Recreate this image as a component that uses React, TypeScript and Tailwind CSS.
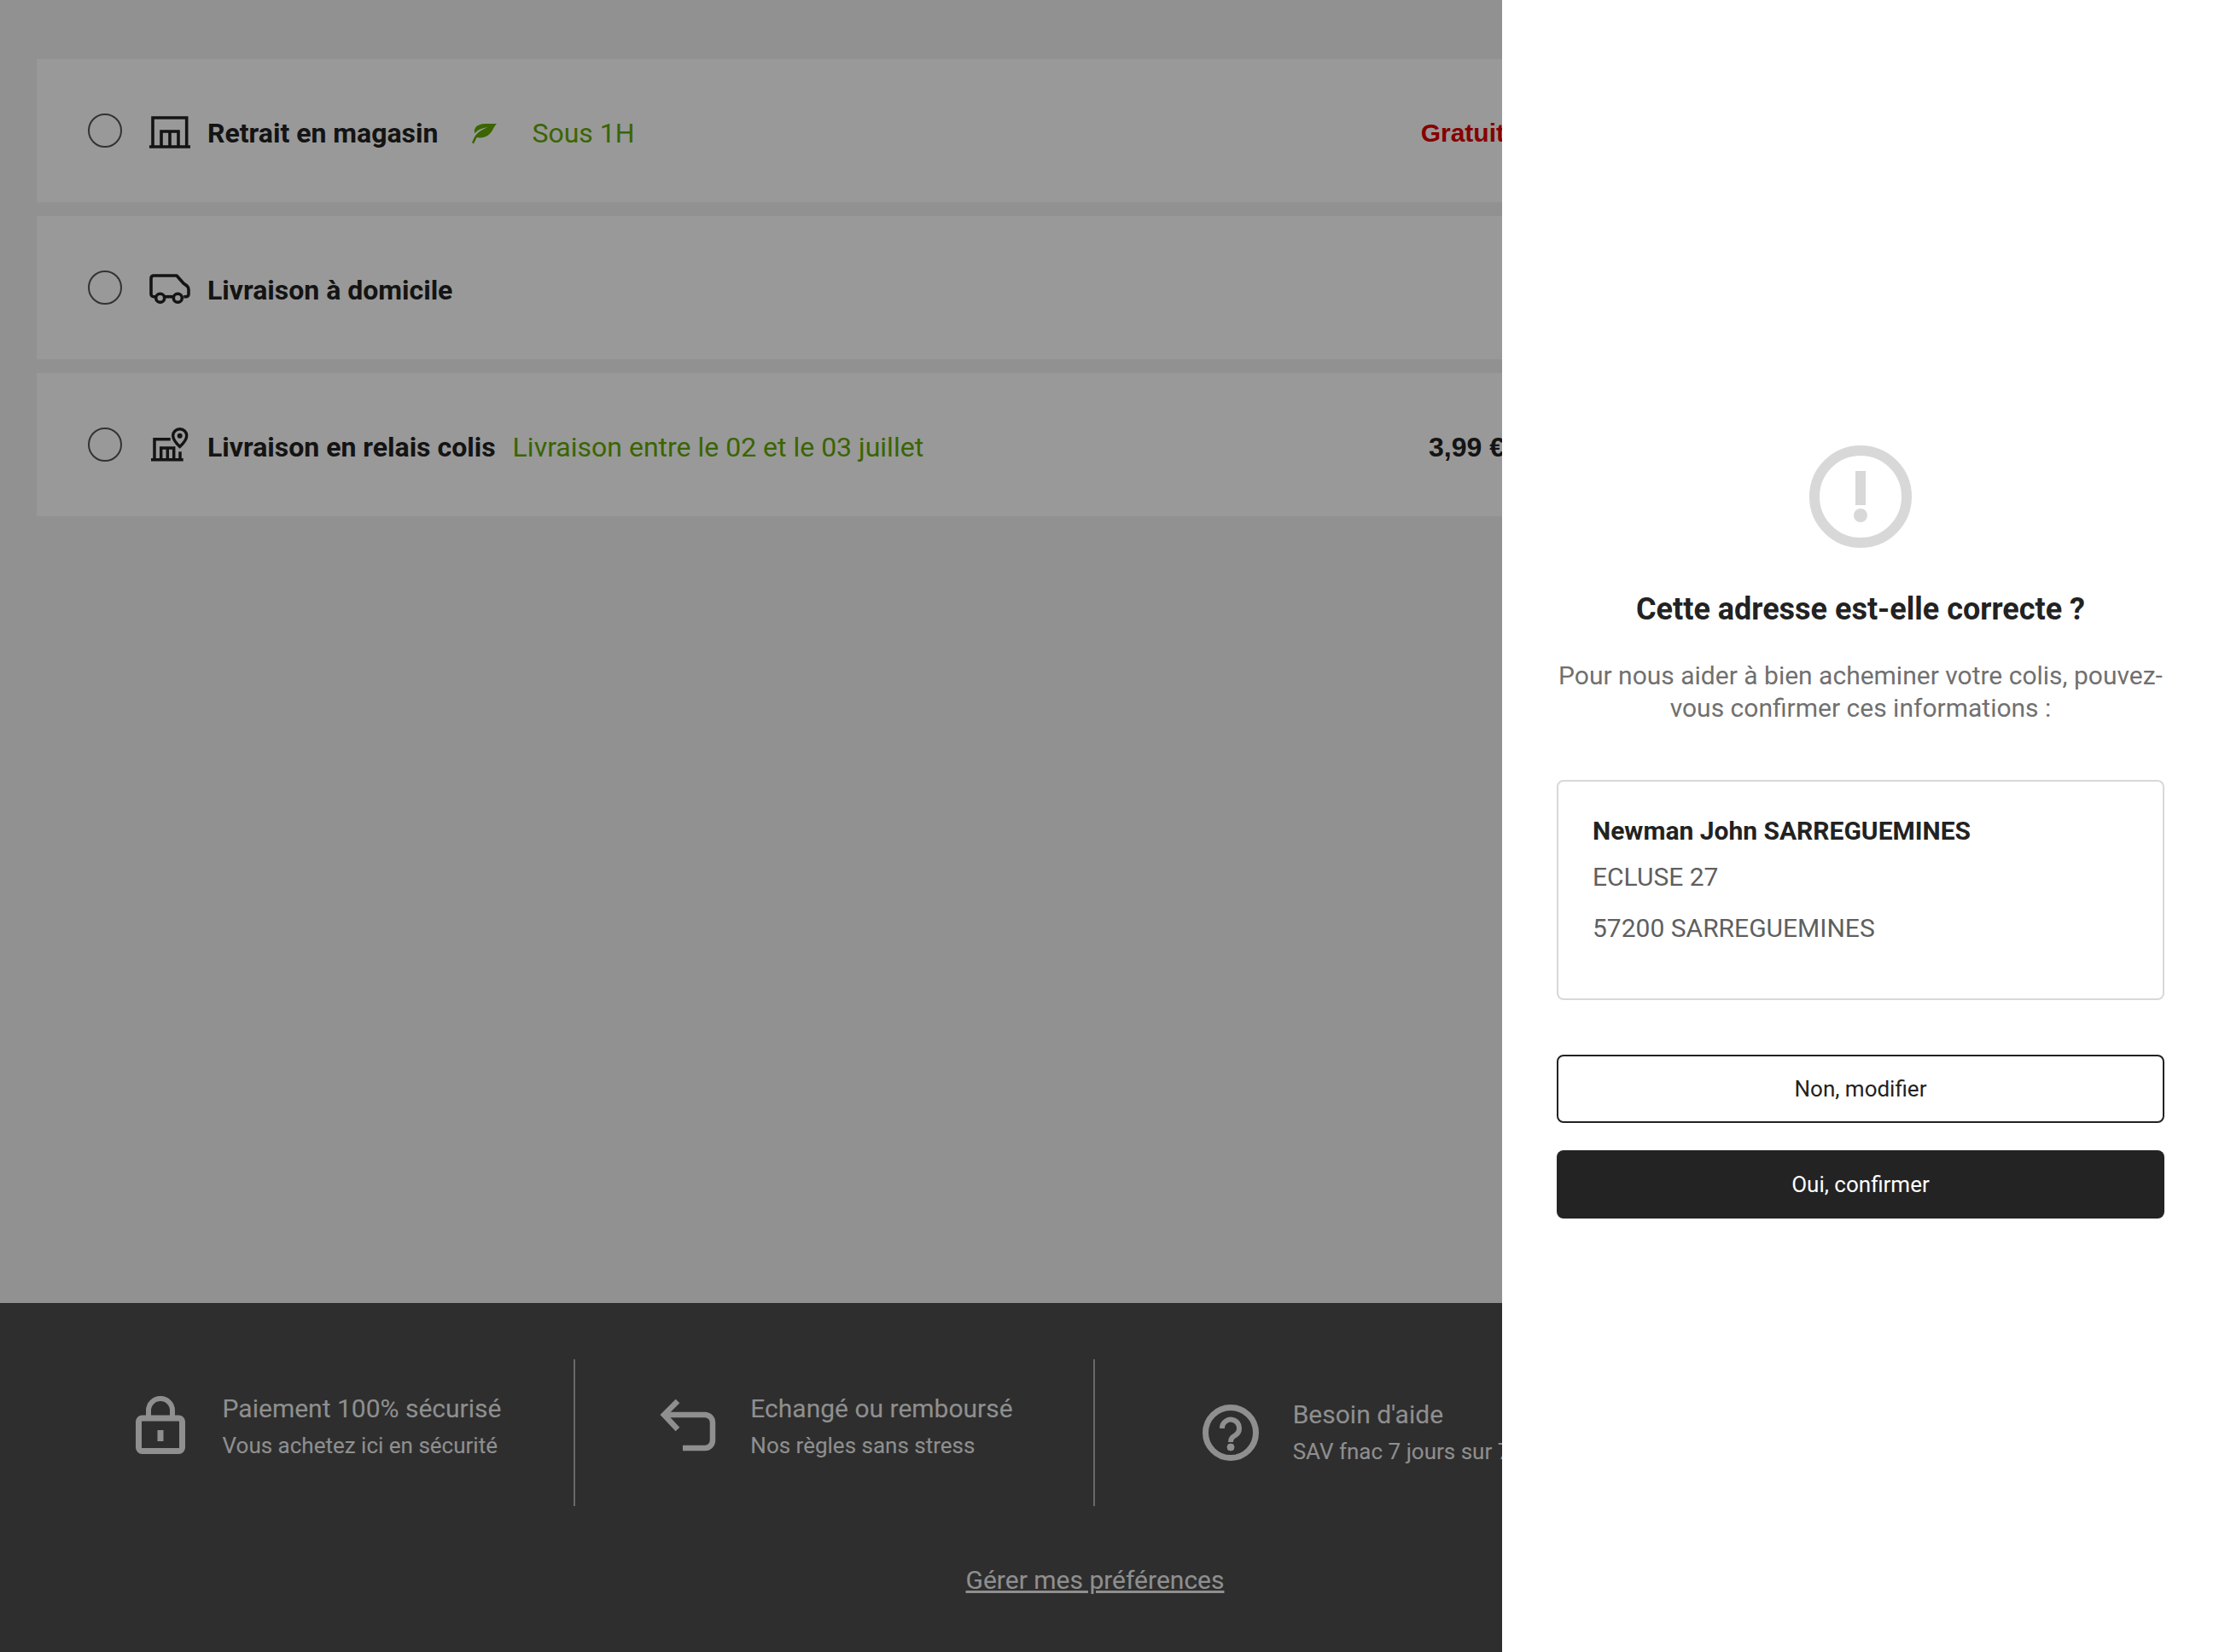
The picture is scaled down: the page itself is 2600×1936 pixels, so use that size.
import React from "react";

const font = "font-['Roboto',sans-serif]";

// --- Icons ---
const ShopIcon = () => (
  <svg className="mt-[3px]" width="48" height="38" viewBox="0 0 48 38" fill="none" stroke="currentColor" strokeWidth="3.6">
    <path d="M4 36V2h39.700v34" />
    <path d="M0 36h48" />
    <path d="M14 36V18h20v18M24 18v18" />
  </svg>
);

const VanIcon = () => (
  <svg className="mt-[3px]" width="48" height="36" viewBox="0 0 48 36" fill="none" stroke="currentColor" strokeWidth="3.6" strokeLinejoin="round">
    <path d="M7.700 26.700H5a3 3 0 0 1-3-3V5a3 3 0 0 1 3-3h27l8 9 4 3c1.500 1.200 2 2.500 2 4.500v5c0 2-1.500 3.200-3 3.200h-2.700" />
    <path d="M17.700 26.700h10.600" />
    <circle cx="12.700" cy="28.300" r="5" />
    <circle cx="33.300" cy="28.300" r="5" />
  </svg>
);

const RelayIcon = () => (
  <svg width="44" height="40" viewBox="0 0 44 40" fill="none" stroke="currentColor" strokeWidth="3.500">
    <path d="M4 38V13.700h18.700" />
    <path d="M0 37.800h37.700" />
    <path d="M11.700 38V24h15v14M19.300 24v14" />
    <path d="M34 28.300V38" />
    <path d="M33.700 22.500C28 17 25.700 13.500 25.700 9.700a8 8 0 0 1 16 0c0 3.800-2.300 7.300-8 12.800z" strokeWidth="3.400" />
    <circle cx="33.700" cy="9.700" r="3" fill="currentColor" stroke="none" />
  </svg>
);

const LeafIcon = () => (
  <svg width="30" height="25" viewBox="0 0 30 25" fill="currentColor">
    <path d="M29 1C22 1.500 12 0 7 3 3.500 5 2 9 3.300 12.300 6 8.500 12 6 19 5 12 7.500 6 11.500 3 16.500L0 23l2 1.500L5.700 17C10 18 15 17 19 14.500 24 11 25 5 29 1z" />
  </svg>
);

const LockIcon = () => (
  <svg width="58" height="68" viewBox="0 0 58 68" fill="none" stroke="currentColor">
    <path d="M15 25v-8a14 14 0 0 1 28 0v8" strokeWidth="6" />
    <rect x="3.500" y="26" width="51" height="38.500" rx="4" strokeWidth="7" />
    <path d="M29 40v13" strokeWidth="7" />
  </svg>
);

const ReturnIcon = () => (
  <svg width="66" height="62" viewBox="0 0 66 62" fill="none" stroke="currentColor" strokeWidth="6.500">
    <path d="M21 3 5 19l16 17" />
    <path d="M5 19h48a9 9 0 0 1 9 9v21a9 9 0 0 1-9 9H27" />
  </svg>
);

const HelpIcon = () => (
  <svg width="66" height="66" viewBox="0 0 66 66" fill="none" stroke="currentColor">
    <circle cx="33" cy="33" r="29.500" strokeWidth="7" />
    <path d="M23 28a10 10 0 1 1 15.500 8c-3.500 2-5.500 3.500-5.500 8" strokeWidth="6" />
    <circle cx="33" cy="50" r="4" fill="currentColor" />
  </svg>
);

const AlertIcon = () => (
  <svg width="120" height="120" viewBox="0 0 120 120" fill="none">
    <circle cx="60" cy="60" r="54" stroke="#d8d8d8" strokeWidth="12" />
    <rect x="54" y="30" width="12" height="40" fill="#d8d8d8" />
    <circle cx="60" cy="82" r="8" fill="#d8d8d8" />
  </svg>
);

// --- Page behind the panel ---
interface RowProps {
  icon: React.ReactNode;
  label: string;
  extra?: React.ReactNode;
  price?: React.ReactNode;
}

const ShippingRow = ({ icon, label, extra, price }: RowProps) => (
  <div className="flex h-[168px] items-center bg-white pl-[60px] pr-[794px]">
    <span className="h-10 w-10 shrink-0 rounded-full border-2 border-[#555] bg-white" />
    <span className="ml-8 flex w-12 shrink-0 justify-center text-[#222]">{icon}</span>
    <span className="ml-5 mt-[5px] text-[32px] font-bold text-[#222]">{label}</span>
    {extra}
    {price && <span className="ml-auto mt-[5px]">{price}</span>}
  </div>
);

interface ReassuranceProps {
  icon: React.ReactNode;
  title: string;
  sub: string;
  last?: boolean;
  low?: boolean;
}

const Reassurance = ({ icon, title, sub, last, low }: ReassuranceProps) => (
  <div className={`flex h-[172px] w-[609px] items-center justify-center gap-[39px] border-[#b0b0b0] pl-1 ${last ? "" : "border-r-2"}`}>
    <span className={`flex w-[68px] justify-center text-[#eeeeee] ${low ? "" : "mb-[18px]"}`}>{icon}</span>
    <div className={low ? "" : "mb-[14px]"}>
      <div className="text-[30px] leading-[44px] text-[#eeeeee]">{title}</div>
      <div className="text-[26px] leading-[42px] text-[#eeeeee]">{sub}</div>
    </div>
  </div>
);

export default function App() {
  return (
    <div className={`relative h-[1936px] w-[2600px] overflow-hidden bg-[#f2f2f2] ${font}`}>
      <div className="flex h-[1527px] flex-col gap-4 px-[43px] pt-[69px]">
        <ShippingRow
          icon={<ShopIcon />}
          label="Retrait en magasin"
          extra={
            <>
              <span className="ml-10 mt-[6px] text-[#61a900]"><LeafIcon /></span>
              <span className="ml-10 mt-[5px] text-[32px] text-[#61a900]">Sous 1H</span>
            </>
          }
          price={<span className="font-['Liberation_Sans',sans-serif] text-[30px] font-bold text-[#e00000]">Gratuit</span>}
        />
        <ShippingRow icon={<VanIcon />} label="Livraison à domicile" />
        <ShippingRow
          icon={<RelayIcon />}
          label="Livraison en relais colis"
          extra={<span className="ml-5 mt-[5px] text-[32px] text-[#61a900]">Livraison entre le 02 et le 03 juillet</span>}
          price={<span className="font-['Liberation_Sans',sans-serif] text-[32px] font-bold text-[#222]">3,99 €</span>}
        />
      </div>

      <footer className="h-[409px] bg-[#4d4d4d] pt-[66px]">
        <div className="flex justify-center pr-[34px]">
          <Reassurance icon={<LockIcon />} title="Paiement 100% sécurisé" sub="Vous achetez ici en sécurité" />
          <Reassurance icon={<ReturnIcon />} title="Echangé ou remboursé" sub="Nos règles sans stress" />
          <Reassurance icon={<HelpIcon />} title="Besoin d'aide" sub="SAV fnac 7 jours sur 7" low />
          <div className="w-[609px]" />
        </div>
        <div className="mt-[64px] pr-[34px] text-center">
          <a className="text-[30px] text-[#eeeeee] underline">Gérer mes préférences</a>
        </div>
      </footer>

      {/* overlay and side panel */}
      <div className="absolute inset-0 bg-black/40" />
      <aside className="absolute bottom-0 right-0 top-0 flex w-[840px] flex-col items-center bg-white px-16 pt-[522px]">
        <AlertIcon />
        <h2 className="mt-[50px] text-[36px] font-bold leading-[44px] text-[#222]">Cette adresse est-elle correcte ?</h2>
        <p className="mt-[37px] text-center text-[30px] leading-[38px] text-[#707070]">
          Pour nous aider à bien acheminer votre colis, pouvez-vous confirmer ces informations :
        </p>
        <div className="mt-[65px] h-[258px] w-full rounded-lg border-2 border-[#d8d8d8] px-10 pt-[38px]">
          <div className="text-[30px] font-bold leading-10 text-[#222]">Newman John SARREGUEMINES</div>
          <div className="mt-[14px] text-[30px] leading-10 text-[#5f5f5f]">ECLUSE 27</div>
          <div className="mt-[20px] text-[30px] leading-10 text-[#5f5f5f]">57200 SARREGUEMINES</div>
        </div>
        <button className="mt-[64px] h-20 w-full rounded-lg border-2 border-[#222] bg-white text-[26px] text-[#222]">Non, modifier</button>
        <button className="mt-8 h-20 w-full rounded-lg bg-[#232323] text-[26px] text-white">Oui, confirmer</button>
      </aside>
    </div>
  );
}
